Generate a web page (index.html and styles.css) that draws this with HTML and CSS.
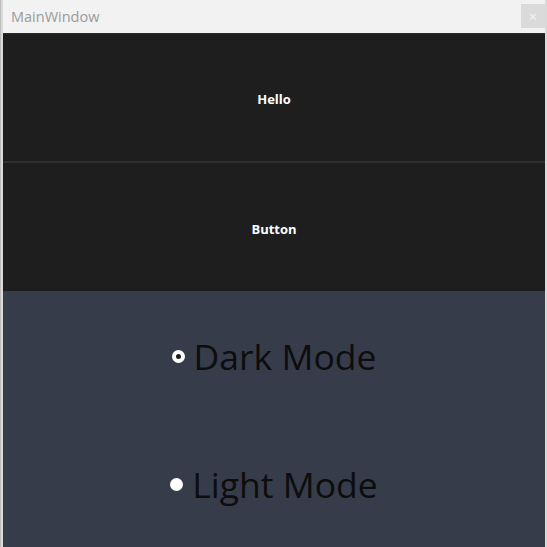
FILE: index.html
```html
<!DOCTYPE html>
<html>
<head>
<meta charset="utf-8">
<link rel="stylesheet" href="styles.css">
</head>
<body>
<div class="frame">
  <div class="titlebar">
    <span class="title">MainWindow</span>
    <span class="close">×</span>
  </div>
  <div class="btn btn-first">Hello</div>
  <div class="btn">Button</div>
  <div class="panel">
    <label class="radio-row">
      <span class="radio checked"></span>
      <span class="radio-text">Dark Mode</span>
    </label>
    <label class="radio-row">
      <span class="radio"></span>
      <span class="radio-text">Light Mode</span>
    </label>
  </div>
</div>
</body>
</html>
```
FILE: styles.css
```css
html, body {
  margin: 0;
  padding: 0;
  width: 547px;
  height: 547px;
  overflow: hidden;
  background: #d9d9d9;
}
.frame {
  width: 547px;
  height: 547px;
  box-sizing: border-box;
  padding: 0 2px 0 2px;
  border-left: 1px solid #bdbdbd;
  display: flex;
  flex-direction: column;
  font-family: "Open Sans", "Noto Sans", sans-serif;
}
.titlebar {
  height: 33px;
  border-bottom: 1px solid #2b2b2b;
  background: #f2f2f2;
  display: flex;
  align-items: center;
  justify-content: space-between;
  padding: 0 0 0 8px;
}
.title {
  font-size: 14.5px;
  color: #9a9a9a;
  margin-top: -1px;
}
.close {
  width: 24px;
  height: 24px;
  background: #dadada;
  color: #f4f4f4;
  font-size: 14px;
  display: flex;
  align-items: center;
  justify-content: center;
  margin-top: -1px;
}
.btn {
  height: 128px;
  background: #1e1e1e;
  color: #ffffff;
  font-weight: bold;
  font-size: 13px;
  display: flex;
  align-items: center;
  justify-content: center;
  padding-top: 3px;
  box-sizing: border-box;
}
.btn-first {
  height: 129px;
  border-bottom: 2px solid #2f2f2f;
}
.panel {
  flex: 1;
  background: #373c4a;
  display: grid;
  grid-template-rows: 1fr 1fr;
}
.radio-row {
  display: flex;
  align-items: center;
  justify-content: center;
  gap: 9px;
}
.radio {
  width: 13px;
  height: 13px;
  border-radius: 50%;
  background: #ffffff;
  box-sizing: border-box;
  margin-top: 3px;
}
.radio.checked {
  border: 4px solid #ffffff;
  background: #1e1e1e;
}
.radio-text {
  font-size: 35.5px;
  color: #0d0d0d;
  line-height: 1;
  margin-top: 4px;
}
```
